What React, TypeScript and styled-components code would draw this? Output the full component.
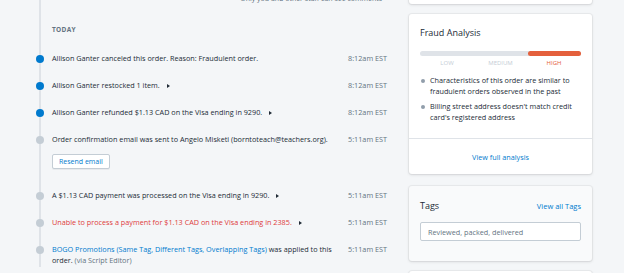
import React from "react";
import styled, { createGlobalStyle } from "styled-components";

const GlobalStyle = createGlobalStyle`
  html, body {
    margin: 0;
    padding: 0;
    background: #f4f6f8;
    font-family: "Open Sans", "Noto Sans", sans-serif;
    color: #212b36;
    overflow: hidden;
  }
`;

const Page = styled.div`
  display: flex;
  align-items: flex-start;
  width: 624px;
  height: 273px;
  overflow: hidden;
`;

const Main = styled.div`
  flex: 0 0 390px;
`;

const Timeline = styled.div`
  margin-left: 39px;
  border-left: 2px solid #dfe3e8;
  height: 273px;
`;

const Note = styled.div`
  margin-top: -6px;
  padding-right: 8px;
  text-align: right;
  font-size: 7px;
  line-height: 10px;
  color: #637381;
`;

const DayLabel = styled.div`
  margin: 21px 0 0 11px;
  font-size: 6.5px;
  line-height: 10px;
  font-weight: 700;
  letter-spacing: 0.3px;
  color: #637381;
`;

const Events = styled.ul`
  list-style: none;
  margin: 18px 0 0;
  padding: 0;
`;

const Event = styled.li<{ $space?: number }>`
  display: flex;
  align-items: flex-start;
  margin-top: ${(p) => p.$space ?? 0}px;
  margin-bottom: 16px;
`;

const Dot = styled.span<{ $active?: boolean }>`
  flex: 0 0 8px;
  height: 8px;
  margin: 1.5px 8px 0 -5px;
  border-radius: 50%;
  background: ${(p) => (p.$active ? "#007ace" : "#c4cdd5")};
`;

const Body = styled.div`
  flex: 1;
  display: flex;
  justify-content: space-between;
  padding-right: 3px;
`;

const Message = styled.div<{ $tone?: "error" }>`
  max-width: 286px;
  font-size: 7.25px;
  line-height: 11px;
  color: ${(p) => (p.$tone === "error" ? "#de3b3b" : "#212b36")};
`;

const Time = styled.div`
  flex: 0 0 auto;
  font-size: 7.25px;
  line-height: 11px;
  color: #637381;
`;

const Caret = styled.span`
  display: inline-block;
  margin-left: 7px;
  width: 0;
  height: 0;
  border-left: 3.5px solid #212b36;
  border-top: 2.5px solid transparent;
  border-bottom: 2.5px solid transparent;
  vertical-align: 0;
`;

const Link = styled.span`
  color: #007ace;
`;

const Muted = styled.span`
  color: #637381;
`;

const Button = styled.button`
  display: block;
  margin: 9px 0 5px;
  height: 15px;
  padding: 0 6px;
  background: #fff;
  border: 1px solid #c4cdd5;
  border-radius: 2px;
  font-family: inherit;
  font-size: 7px;
  color: #007ace;
  box-shadow: 0 1px 0 rgba(22, 29, 37, 0.05);
`;

const Side = styled.div`
  flex: 0 0 183px;
  margin-left: 19px;
  display: flex;
  flex-direction: column;
`;

const Card = styled.div<{ $subdued?: boolean; $space?: number }>`
  margin-top: ${(p) => p.$space ?? 0}px;
  background: ${(p) => (p.$subdued ? "#f9fafb" : "#fff")};
  border-radius: 3px;
  box-shadow: 0 0 0 1px rgba(63, 63, 68, 0.05), 0 1px 3px 0 rgba(63, 63, 68, 0.15);
`;

const TopCard = styled(Card)`
  height: 24px;
`;

const Section = styled.div`
  padding: 13px 11px 15px;
`;

const Title = styled.div`
  font-size: 9px;
  line-height: 12px;
  color: #212b36;
`;

const Bar = styled.div`
  display: flex;
  height: 5px;
  margin-top: 12px;
  border-radius: 3px;
  background: #dfe3e8;
`;

const BarFill = styled.div`
  margin-left: auto;
  width: 53px;
  border-radius: 3px;
  background: #e4603c;
`;

const Levels = styled.div`
  display: grid;
  grid-template-columns: 54px 53px 54px;
  margin-top: 3px;
`;

const Level = styled.span<{ $on?: boolean }>`
  text-align: center;
  font-size: 6px;
  line-height: 8px;
  color: ${(p) => (p.$on ? "#e4603c" : "#c4cdd5")};
`;

const Reasons = styled.ul`
  list-style: none;
  margin: 8px 0 0;
  padding: 0;
  display: flex;
  flex-direction: column;
  gap: 4px;
`;

const Reason = styled.li`
  display: flex;
  font-size: 7.25px;
  line-height: 11px;
  color: #212b36;

  &::before {
    content: "";
    flex: 0 0 4px;
    height: 4px;
    margin: 4px 5px 0 1px;
    border-radius: 50%;
    background: #919eab;
  }
`;

const Footer = styled.div`
  display: flex;
  align-items: center;
  justify-content: center;
  height: 35px;
  border-top: 1px solid #dfe3e8;
  font-size: 7.25px;
  color: #007ace;
`;

const TagsSection = styled.div`
  padding: 14px 11px 20px;
`;

const Heading = styled.div`
  display: flex;
  justify-content: space-between;
  align-items: center;
`;

const SmallLink = styled.span`
  font-size: 7.5px;
  color: #007ace;
`;

const Input = styled.div`
  margin-top: 10px;
  height: 19px;
  display: flex;
  align-items: center;
  padding: 0 7px;
  background: #fff;
  border: 1px solid #c4cdd5;
  border-radius: 2px;
  box-sizing: border-box;
  font-size: 7.25px;
  color: #637381;
`;

export default function App() {
  return (
    <>
      <GlobalStyle />
      <Page>
        <Main>
          <Timeline>
            <Note>Only you and other staff can see comments</Note>
            <DayLabel>TODAY</DayLabel>
            <Events>
              <Event>
                <Dot $active />
                <Body>
                  <Message>Allison Ganter canceled this order. Reason: Fraudulent order.</Message>
                  <Time>8:12am EST</Time>
                </Body>
              </Event>
              <Event>
                <Dot $active />
                <Body>
                  <Message>
                    Allison Ganter restocked 1 item.
                    <Caret />
                  </Message>
                  <Time>8:12am EST</Time>
                </Body>
              </Event>
              <Event>
                <Dot $active />
                <Body>
                  <Message>
                    Allison Ganter refunded $1.13 CAD on the Visa ending in 9290.
                    <Caret />
                  </Message>
                  <Time>8:12am EST</Time>
                </Body>
              </Event>
              <Event>
                <Dot />
                <Body>
                  <Message>
                    Order confirmation email was sent to Angelo Misketi (borntoteach@teachers.org).
                    <Button>Resend email</Button>
                  </Message>
                  <Time>5:11am EST</Time>
                </Body>
              </Event>
              <Event>
                <Dot />
                <Body>
                  <Message>
                    A $1.13 CAD payment was processed on the Visa ending in 9290.
                    <Caret />
                  </Message>
                  <Time>5:11am EST</Time>
                </Body>
              </Event>
              <Event>
                <Dot />
                <Body>
                  <Message $tone="error">
                    Unable to process a payment for $1.13 CAD on the Visa ending in 2385.
                    <Caret />
                  </Message>
                  <Time>5:11am EST</Time>
                </Body>
              </Event>
              <Event $space={2}>
                <Dot />
                <Body>
                  <Message>
                    <Link>BOGO Promotions (Same Tag, Different Tags, Overlapping Tags)</Link> was applied to this
                    order. <Muted>(via Script Editor)</Muted>
                  </Message>
                  <Time>5:11am EST</Time>
                </Body>
              </Event>
            </Events>
          </Timeline>
        </Main>
        <Side>
          <TopCard $space={-20} />
          <Card $space={10}>
            <Section>
              <Title>Fraud Analysis</Title>
              <Bar>
                <BarFill />
              </Bar>
              <Levels>
                <Level>LOW</Level>
                <Level>MEDIUM</Level>
                <Level $on>HIGH</Level>
              </Levels>
              <Reasons>
                <Reason>Characteristics of this order are similar to fraudulent orders observed in the past</Reason>
                <Reason>Billing street address doesn't match credit card's registered address</Reason>
              </Reasons>
            </Section>
            <Footer>View full analysis</Footer>
          </Card>
          <Card $subdued $space={12}>
            <TagsSection>
              <Heading>
                <Title>Tags</Title>
                <SmallLink>View all Tags</SmallLink>
              </Heading>
              <Input>Reviewed, packed, delivered</Input>
            </TagsSection>
          </Card>
          <Card $space={10}>
            <Section />
          </Card>
        </Side>
      </Page>
    </>
  );
}
